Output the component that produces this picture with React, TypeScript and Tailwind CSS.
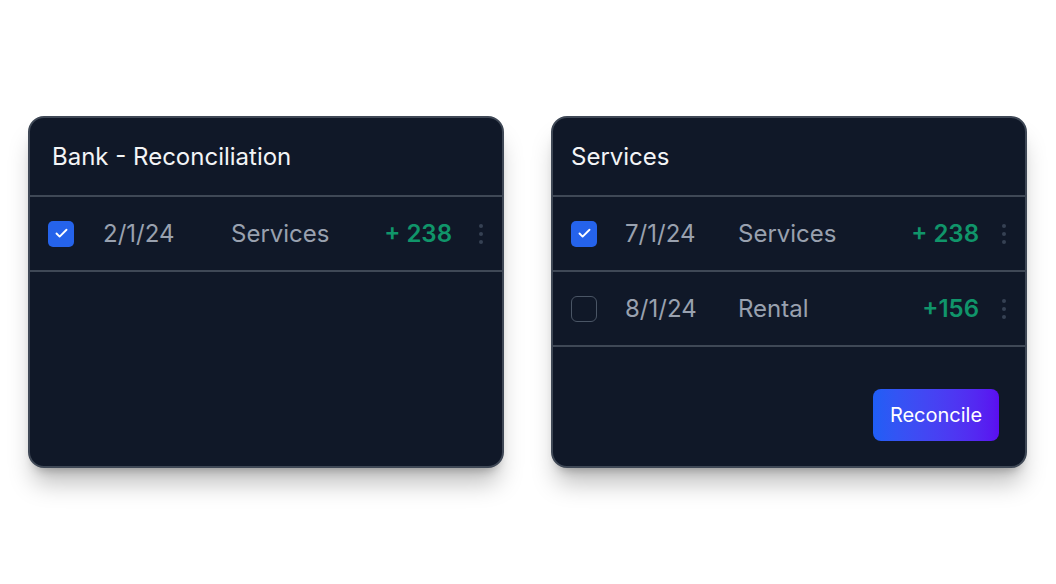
import { Check } from 'lucide-react'

interface Row {
  checked: boolean
  date: string
  label: string
  amount: string
}

interface CardProps {
  title: string
  rows: Row[]
  headerPad: string
  dateClass: string
  dotsGap: string
  footer?: boolean
}

function Dots({ gap }: { gap: string }) {
  return (
    <div className={`flex flex-col items-center gap-[4px] ${gap}`}>
      <span className="w-[4px] h-[4px] rounded-full bg-gray-700" />
      <span className="w-[4px] h-[4px] rounded-full bg-gray-700" />
      <span className="w-[4px] h-[4px] rounded-full bg-gray-700" />
    </div>
  )
}

function Card({ title, rows, headerPad, dateClass, dotsGap, footer }: CardProps) {
  return (
    <div className="w-[476px] h-[352px] flex flex-col rounded-2xl bg-gray-900 border-2 border-[#3f4856] shadow-xl shadow-black/25">
      {/* Header */}
      <div className={`h-[79px] shrink-0 flex items-center ${headerPad} border-b-2 border-[#3f4856]`}>
        <h3 className="text-2xl text-gray-100">{title}</h3>
      </div>

      {/* Filas */}
      {rows.map(r => (
        <div
          key={r.date}
          className="h-[75px] shrink-0 flex items-center pl-[18px] pr-[19px] border-b-2 border-[#3f4856]"
        >
          {r.checked ? (
            <div className="w-[26px] h-[26px] rounded-[5px] bg-[#2563eb] flex items-center justify-center shrink-0">
              <Check size={15} strokeWidth={3} className="text-white" />
            </div>
          ) : (
            <div className="w-[26px] h-[26px] rounded-[6px] border border-gray-600 shrink-0" />
          )}
          <span className={`${dateClass} text-2xl text-gray-400`}>{r.date}</span>
          <span className="text-2xl text-gray-400">{r.label}</span>
          <span className="ml-auto text-2xl font-semibold text-[#10956a]">{r.amount}</span>
          <Dots gap={dotsGap} />
        </div>
      ))}

      {footer && (
        <div className="mt-auto flex justify-end pr-[26px] pb-[25px]">
          <button className="w-[126px] h-[52px] rounded-lg bg-linear-to-r from-[#1f5ef5] to-[#5a0df0] text-xl text-white">
            Reconcile
          </button>
        </div>
      )}
    </div>
  )
}

export default function App() {
  return (
    <div
      className="w-[1056px] h-[584px] bg-white flex items-center pl-[28px] gap-[47px]"
      style={{ fontFamily: 'Inter, "Noto Sans", sans-serif' }}
    >
      <Card
        title="Bank - Reconciliation"
        headerPad="px-[22px]"
        dateClass="ml-[29px] w-[128px]"
        dotsGap="ml-[27px]"
        rows={[{ checked: true, date: '2/1/24', label: 'Services', amount: '+ 238' }]}
      />
      <Card
        title="Services"
        headerPad="px-[18px]"
        dateClass="ml-[28px] w-[113px]"
        dotsGap="ml-[23px]"
        footer
        rows={[
          { checked: true, date: '7/1/24', label: 'Services', amount: '+ 238' },
          { checked: false, date: '8/1/24', label: 'Rental', amount: '+156' },
        ]}
      />
    </div>
  )
}
